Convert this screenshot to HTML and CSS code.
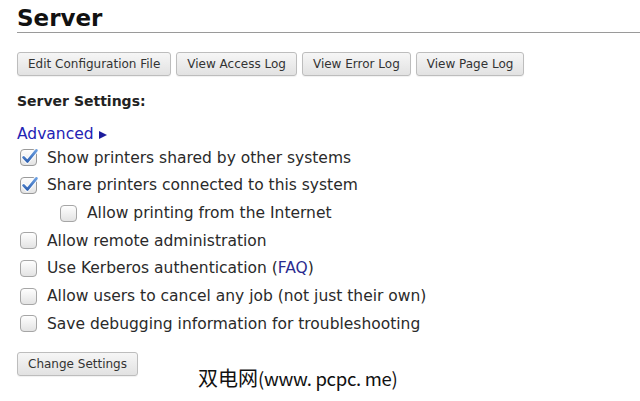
FILE: index.html
```html
<!DOCTYPE html>
<html>
<head>
<meta charset="utf-8">
<link rel="stylesheet" href="styles.css">
</head>
<body>
<div class="page">
  <h1 class="title">Server</h1>
  <div class="content">
    <div class="toolbar">
      <button class="btn">Edit Configuration File</button>
      <button class="btn">View Access Log</button>
      <button class="btn">View Error Log</button>
      <button class="btn">View Page Log</button>
    </div>
    <h2 class="section">Server Settings:</h2>
    <div class="advanced"><a class="adv-link">Advanced</a><span class="tri"></span></div>
    <div class="options">
      <label class="opt">
        <svg class="cb" viewBox="0 0 17 17" width="17" height="17"><defs><linearGradient id="g1" x1="0" y1="0" x2="0" y2="1"><stop offset="0" stop-color="#ffffff"/><stop offset="1" stop-color="#e2e2e2"/></linearGradient><linearGradient id="g2" x1="0" y1="0" x2="0" y2="1"><stop offset="0" stop-color="#6a9ee0"/><stop offset="1" stop-color="#3264b4"/></linearGradient></defs><rect x="0.5" y="0.5" width="16" height="16" rx="3.5" fill="url(#g1)" stroke="#9a9a9a"/><path d="M3.6 8.4 L7.4 12.4 L16.4 1.4" fill="none" stroke="#ffffff" stroke-width="4.6" stroke-linecap="round" stroke-linejoin="round"/><path d="M3.6 8.4 L7.4 12.4 L16.4 1.4" fill="none" stroke="url(#g2)" stroke-width="2.8" stroke-linecap="round" stroke-linejoin="round"/></svg>
        <span>Show printers shared by other systems</span>
      </label>
      <label class="opt">
        <svg class="cb" viewBox="0 0 17 17" width="17" height="17"><rect x="0.5" y="0.5" width="16" height="16" rx="3.5" fill="url(#g1)" stroke="#9a9a9a"/><path d="M3.6 8.4 L7.4 12.4 L16.4 1.4" fill="none" stroke="#ffffff" stroke-width="4.6" stroke-linecap="round" stroke-linejoin="round"/><path d="M3.6 8.4 L7.4 12.4 L16.4 1.4" fill="none" stroke="url(#g2)" stroke-width="2.8" stroke-linecap="round" stroke-linejoin="round"/></svg>
        <span>Share printers connected to this system</span>
      </label>
      <label class="opt sub">
        <svg class="cb" viewBox="0 0 17 17" width="17" height="17"><rect x="0.5" y="0.5" width="16" height="16" rx="3.5" fill="url(#g1)" stroke="#a6a6a6"/></svg>
        <span>Allow printing from the Internet</span>
      </label>
      <label class="opt">
        <svg class="cb" viewBox="0 0 17 17" width="17" height="17"><rect x="0.5" y="0.5" width="16" height="16" rx="3.5" fill="url(#g1)" stroke="#a6a6a6"/></svg>
        <span>Allow remote administration</span>
      </label>
      <label class="opt">
        <svg class="cb" viewBox="0 0 17 17" width="17" height="17"><rect x="0.5" y="0.5" width="16" height="16" rx="3.5" fill="url(#g1)" stroke="#a6a6a6"/></svg>
        <span>Use Kerberos authentication (<a class="faq">FAQ</a>)</span>
      </label>
      <label class="opt">
        <svg class="cb" viewBox="0 0 17 17" width="17" height="17"><rect x="0.5" y="0.5" width="16" height="16" rx="3.5" fill="url(#g1)" stroke="#a6a6a6"/></svg>
        <span>Allow users to cancel any job (not just their own)</span>
      </label>
      <label class="opt">
        <svg class="cb" viewBox="0 0 17 17" width="17" height="17"><rect x="0.5" y="0.5" width="16" height="16" rx="3.5" fill="url(#g1)" stroke="#a6a6a6"/></svg>
        <span>Save debugging information for troubleshooting</span>
      </label>
    </div>
    <button class="btn submit">Change Settings</button>
  </div>
  <div class="watermark"><span class="wm-cjk">双电网</span><span class="wm-latin">(www. pcpc. me)</span></div>
</div>
</body>
</html>
```
FILE: styles.css
```css
html, body {
  margin: 0;
  padding: 0;
  background: #ffffff;
}
body {
  font-family: "DejaVu Sans", sans-serif;
  color: #2a2a2a;
  width: 640px;
  height: 401px;
  overflow: hidden;
}
.page {
  position: relative;
  height: 401px;
}
.title {
  margin: 0 0 0 17px;
  padding-top: 4px;
  font-size: 23px;
  line-height: 28px;
  font-weight: bold;
  color: #111111;
  border-bottom: 1px solid #9a9a9a;
}
.content {
  padding-left: 17px;
}
.toolbar {
  display: flex;
  gap: 5px;
  margin-top: 19px;
}
.btn {
  font-family: "DejaVu Sans", sans-serif;
  font-size: 12px;
  line-height: 14px;
  padding: 4px 10px;
  border: 1px solid #bdbdbd;
  border-radius: 3px;
  background: linear-gradient(#f6f6f6, #e2e2e2);
  color: #333333;
  margin: 0;
  box-shadow: 0 1px 1px rgba(0,0,0,0.06);
}
.section {
  margin: 17px 0 0 0;
  font-size: 14px;
  line-height: 17px;
  font-weight: bold;
  color: #222222;
}
.advanced {
  margin-top: 15px;
  font-size: 15.5px;
  line-height: 18px;
  display: flex;
  align-items: center;
}
.adv-link {
  color: #2323b4;
}
.tri {
  width: 0;
  height: 0;
  border-top: 4px solid transparent;
  border-bottom: 4px solid transparent;
  border-left: 8px solid #1c1c9c;
  margin-left: 5px;
  margin-top: 2px;
}
.options {
  display: flex;
  flex-direction: column;
  margin-top: 1px;
}
.opt {
  display: flex;
  align-items: center;
  height: 27.66px;
  font-size: 15.5px;
  line-height: 18px;
  color: #2a2a2a;
}
.opt.sub {
  padding-left: 40px;
}
.cb {
  display: block;
  margin-left: 3px;
  margin-right: 10px;
  flex: none;
  overflow: visible;
}
.faq {
  color: #2b2b8f;
}
.submit {
  margin-top: 14px;
}
.watermark {
  position: absolute;
  left: 198px;
  top: 364px;
  font-family: "Noto Sans CJK SC", sans-serif;
  line-height: 28px;
  color: #111111;
  text-shadow: 1px 0 0 #fff, -1px 0 0 #fff, 0 1px 0 #fff, 0 -1px 0 #fff;
  white-space: nowrap;
}
.wm-cjk {
  font-size: 20px;
}
.wm-latin {
  font-size: 18.5px;
  letter-spacing: -0.3px;
}
```
